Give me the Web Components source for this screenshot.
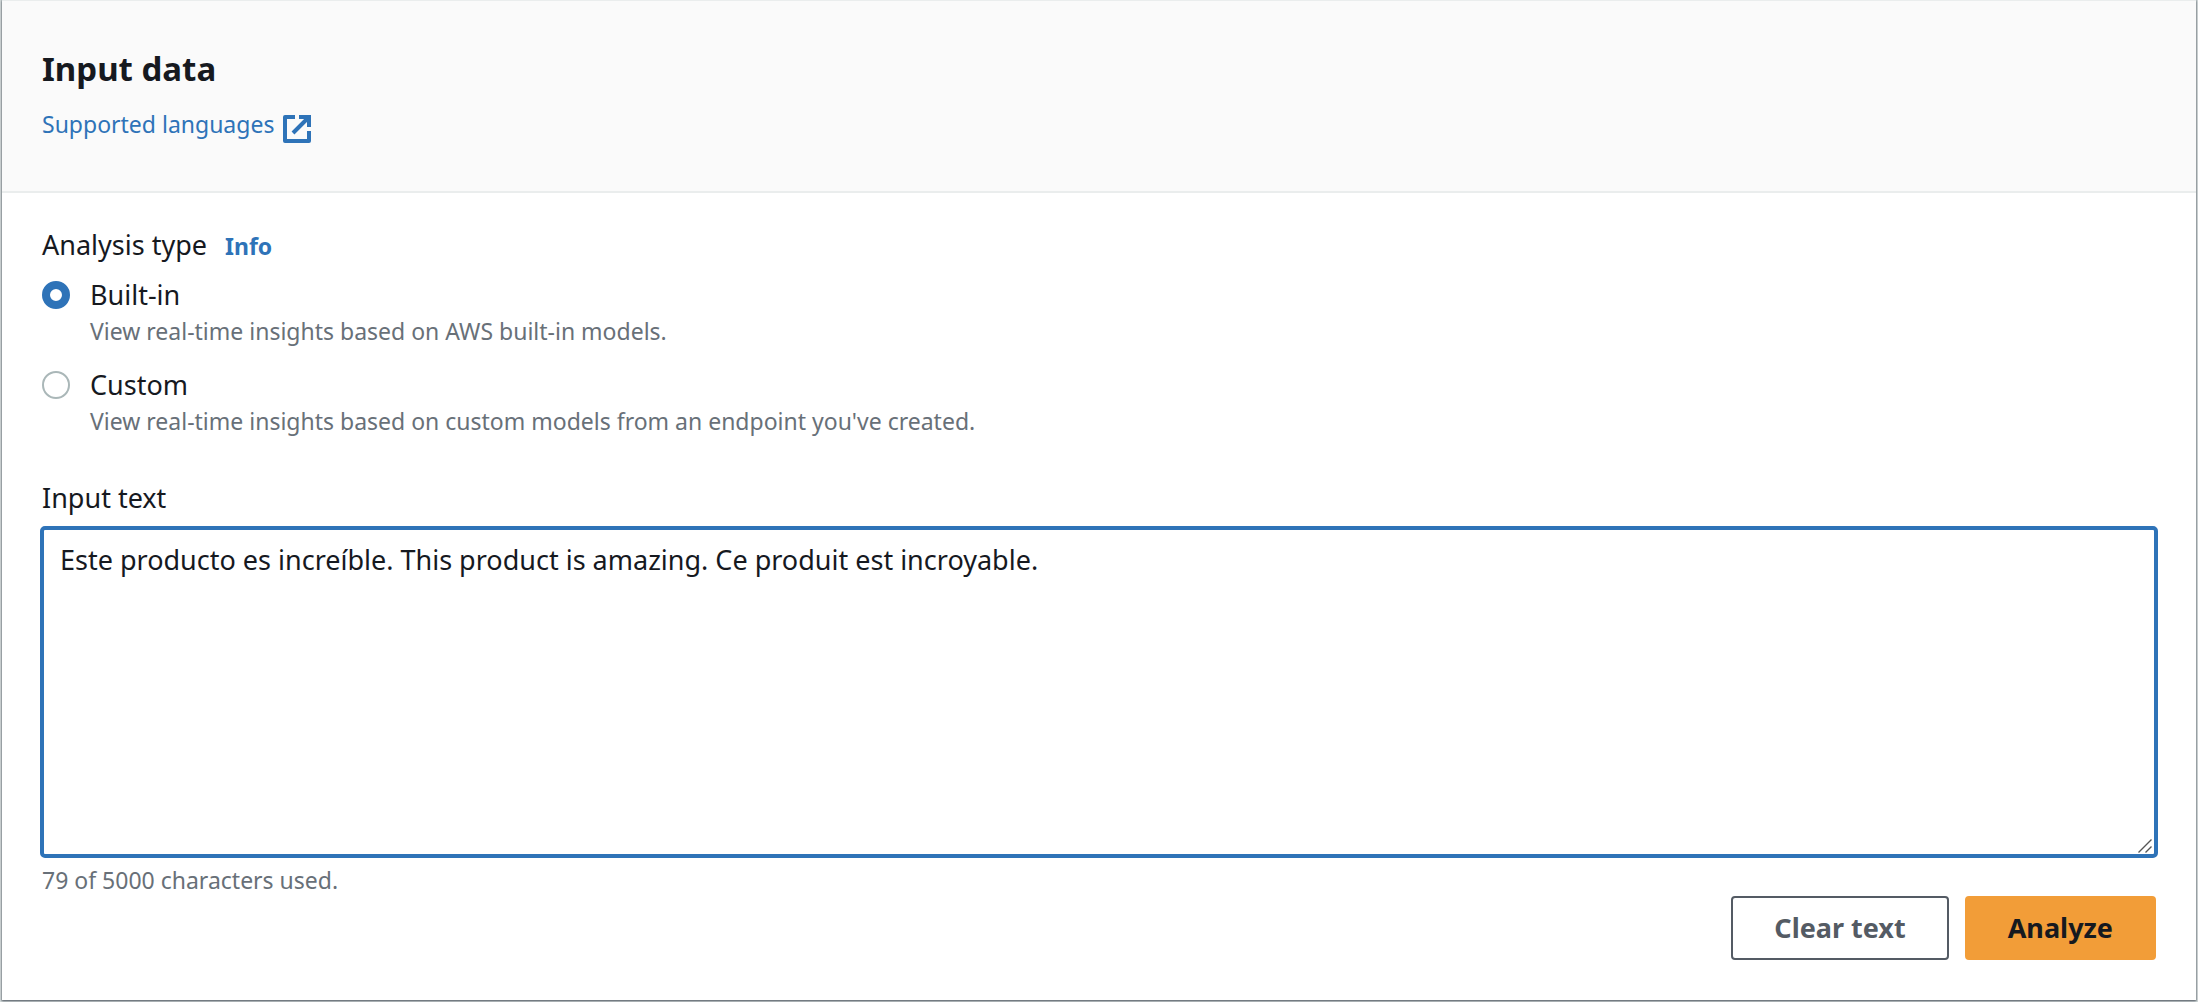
<!DOCTYPE html>
<html lang="en">
<head>
<meta charset="utf-8">
<title>Input data</title>
<style>
:root{--ink:#16191f;--muted:#687078;--blue:#2e73b8;--line:#eaeded;--orange:#f29d38;--slate:#545b64}
html{background:#d5dbdb}
body{margin:0;font-family:"Noto Sans","Open Sans",sans-serif;font-size:27px;line-height:40px;color:var(--ink)}
</style>
</head>
<body>
<input-data-panel></input-data-panel>
<script>
const define = (name, html, setup) => customElements.define(name, class extends HTMLElement {
  constructor() {
    super();
    this.attachShadow({ mode: 'open' }).innerHTML = '<style>*{box-sizing:border-box}</style>' + html;
  }
  connectedCallback() { if (setup) setup(this, this.shadowRoot); }
});

define('external-link', `
<style>
:host{display:block;font-size:23px;line-height:32px}
a{display:inline-flex;align-items:center;gap:9px;color:var(--blue);text-decoration:none}
svg{display:block;width:28px;height:28px;margin-top:10px}
</style>
<a href="#languages"><slot></slot><svg viewBox="0 0 28 28" fill="none" stroke="currentColor" stroke-width="4" aria-hidden="true"><path d="M12 2H2V26H26V16" stroke-linejoin="round"/><path d="M16 2H26V12M26 2L10 18"/></svg></a>`);

define('panel-card', `
<style>
:host{display:block;margin:0 2px 3px;background:#fff;border-top:1px solid #eaeded;box-shadow:0 1px 2px #545b64,0 0 1px 1px #b8c0c2}
header{background:#fafafa;border-bottom:2px solid var(--line);padding:44px 40px 48px}
.body{padding:32px 40px 40px}
</style>
<header><slot name="header"></slot></header>
<div class="body"><slot></slot></div>`);

define('radio-option', `
<style>
:host{display:block}
label{display:grid;grid-template-columns:28px 1fr;column-gap:20px;align-items:center}
input{appearance:none;width:28px;height:28px;margin:0;border:2px solid #aab7b8;border-radius:50%;background:#fff}
input:checked{border:8px solid var(--blue)}
small{grid-column:2;font-size:23px;line-height:32px;color:var(--muted)}
</style>
<label><input type="radio"><span><slot></slot></span><small><slot name="description"></slot></small></label>`,
(host, root) => {
  const input = root.querySelector('input');
  input.checked = host.hasAttribute('checked');
  input.addEventListener('change', () => host.dispatchEvent(new CustomEvent('pick', { bubbles: true })));
  host.addEventListener('unpick', () => { input.checked = false; });
});

define('analysis-type', `
<style>
:host{display:block}
.title{display:flex;align-items:baseline;gap:18px}
a{font-size:23px;font-weight:700;color:var(--blue);text-decoration:none}
.options{display:grid;gap:18px;margin-top:9px}
</style>
<div class="title"><span>Analysis type</span><a href="#info">Info</a></div>
<div class="options" role="radiogroup" aria-label="Analysis type">
<radio-option checked>Built-in<span slot="description">View real-time insights based on AWS built-in models.</span></radio-option>
<radio-option>Custom<span slot="description">View real-time insights based on custom models from an endpoint you've created.</span></radio-option>
</div>`,
(host, root) => root.addEventListener('pick', e => {
  root.querySelectorAll('radio-option').forEach(o => { if (o !== e.target) o.dispatchEvent(new Event('unpick')); });
}));

define('text-field', `
<style>
:host{display:block}
label{display:block}
.box{position:relative;margin:8px -2px 0}
textarea{display:block;width:100%;height:332px;padding:10px 16px;border:4px solid var(--blue);border-radius:5px;background:#fff;color:inherit;font:inherit;resize:none;outline:0}
svg{position:absolute;right:6px;bottom:5px;width:14px;height:14px;pointer-events:none}
.hint{font-size:23px;line-height:32px;margin-top:6px;color:var(--muted)}
</style>
<label for="text">Input text</label>
<div class="box"><textarea id="text" spellcheck="false">Este producto es increíble. This product is amazing. Ce produit est incroyable.</textarea>
<svg viewBox="0 0 14 14" stroke="#555" stroke-width="1.4" aria-hidden="true"><path d="M0.5 13.5L13.5 0.5M7.5 13.5L13.5 7.5"/></svg></div>
<div class="hint">79 of 5000 characters used.</div>`);

define('action-button', `
<style>
:host{display:block}
button{display:block;height:64px;padding:0 41px;border:2px solid var(--slate);border-radius:4px;background:#fff;color:var(--slate);font:inherit;font-weight:700}
:host([primary]) button{background:var(--orange);border-color:var(--orange);color:var(--ink)}
</style>
<button type="button"><slot></slot></button>`);

define('input-data-panel', `
<style>
:host{display:block}
h1{margin:0;font-size:33px;line-height:48px;font-weight:700}
external-link{margin-top:12px}
text-field{margin-top:41px}
.actions{display:flex;justify-content:flex-end;gap:16px}
</style>
<panel-card>
<div slot="header"><h1>Input data</h1><external-link>Supported languages</external-link></div>
<analysis-type></analysis-type>
<text-field></text-field>
<div class="actions"><action-button>Clear text</action-button><action-button primary>Analyze</action-button></div>
</panel-card>`);
</script>
</body>
</html>
